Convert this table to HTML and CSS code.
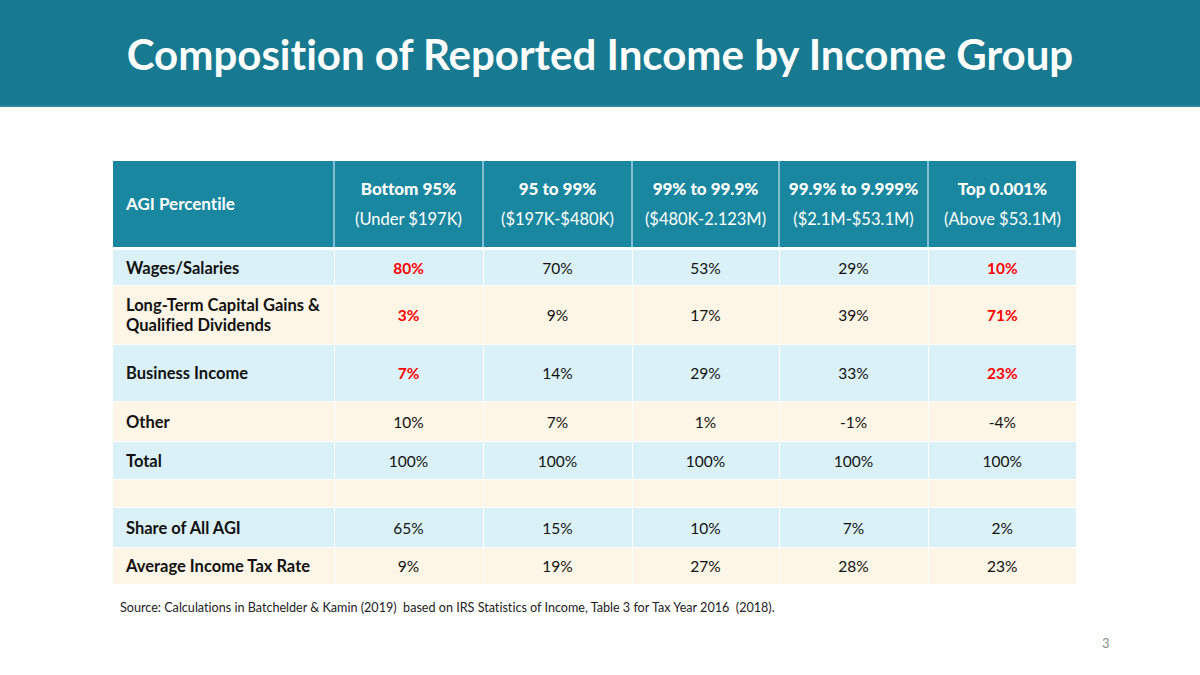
FILE: index.html
```html
<!DOCTYPE html>
<html lang="en">
<head>
    <meta charset="UTF-8">
    <meta name="viewport" content="width=device-width, initial-scale=1.0">
    <title>Composition of Reported Income by Income Group</title>
    <link rel="stylesheet" href="styles.css">
</head>
<body>
    <div class="titulo">
        <h1>Composition of Reported Income by Income Group</h1>
    </div>

    <div class="conteudo">
        <table class="tabela">
            <colgroup>
                <col class="c221">
                <col class="c149">
                <col class="c149">
                <col class="c147">
                <col class="c149">
                <col class="c148">
            </colgroup>
            <thead>
                <tr>
                    <th class="rotulo">AGI Percentile</th>
                    <th><b>Bottom 95%</b><span>(Under $197K)</span></th>
                    <th><b>95 to 99%</b><span>($197K-$480K)</span></th>
                    <th><b>99% to 99.9%</b><span>($480K-2.123M)</span></th>
                    <th><b>99.9% to 9.999%</b><span>($2.1M-$53.1M)</span></th>
                    <th><b>Top 0.001%</b><span>(Above $53.1M)</span></th>
                </tr>
            </thead>
            <tbody>
                <tr class="azul l37">
                    <td>Wages/Salaries</td>
                    <td class="red">80%</td><td>70%</td><td>53%</td><td>29%</td><td class="red">10%</td>
                </tr>
                <tr class="bege l59">
                    <td>Long-Term Capital Gains &amp;<br>Qualified Dividends</td>
                    <td class="red">3%</td><td>9%</td><td>17%</td><td>39%</td><td class="red">71%</td>
                </tr>
                <tr class="azul l57">
                    <td>Business Income</td>
                    <td class="red">7%</td><td>14%</td><td>29%</td><td>33%</td><td class="red">23%</td>
                </tr>
                <tr class="bege l40">
                    <td>Other</td>
                    <td>10%</td><td>7%</td><td>1%</td><td>-1%</td><td>-4%</td>
                </tr>
                <tr class="azul l38">
                    <td>Total</td>
                    <td>100%</td><td>100%</td><td>100%</td><td>100%</td><td>100%</td>
                </tr>
                <tr class="bege l28">
                    <td></td><td></td><td></td><td></td><td></td><td></td>
                </tr>
                <tr class="azul l40">
                    <td>Share of All AGI</td>
                    <td>65%</td><td>15%</td><td>10%</td><td>7%</td><td>2%</td>
                </tr>
                <tr class="bege l37">
                    <td>Average Income Tax Rate</td>
                    <td>9%</td><td>19%</td><td>27%</td><td>28%</td><td>23%</td>
                </tr>
            </tbody>
        </table>

        <p class="fonte">Source: Calculations in Batchelder &amp; Kamin (2019)&nbsp; based on IRS Statistics of Income, Table 3 for Tax Year 2016&nbsp; (2018).</p>
    </div>

    <div class="pagina">3</div>
</body>
</html>
```

FILE: styles.css
```css
body{
    margin: 0;
    width: 1200px;
    height: 675px;
    background-color: white;
    font-family: Lato, "Open Sans", Arial, sans-serif;
    font-variant-ligatures: none;
    overflow: hidden;
}

.titulo{
    background-color: #177a91;
    height: 105px;
    border-bottom: 2px solid #2a8ba1;
    display: flex;
    align-items: center;
    justify-content: center;
}

.titulo > h1{
    margin: 0;
    margin-top: 2px;
    color: white;
    font-size: 42px;
    font-weight: bold;
}

.conteudo{
    padding-top: 54px;
    padding-left: 113px;
}

.tabela{
    border-collapse: collapse;
    table-layout: fixed;
    width: 963px;
    font-size: 15.5px;
    color: #111;
}

.c221{ width: 221px; }
.c149{ width: 149px; }
.c147{ width: 147px; }
.c148{ width: 148px; }

.tabela th{
    background-color: #1a87a0;
    color: white;
    height: 86px;
    padding: 0;
    border-left: 2px solid #7fbfcf;
    border-bottom: 3px solid white;
    line-height: 30px;
    text-align: center;
}

.tabela th:first-child{
    border-left: none;
}

.tabela th b{
    display: block;
    font-size: 17px;
}

.tabela th span{
    display: block;
    font-weight: normal;
    font-size: 16.5px;
}

.tabela th.rotulo{
    text-align: left;
    padding-left: 13px;
    font-size: 17px;
}

.tabela td{
    padding: 0;
    border: 1px solid white;
    text-align: center;
    line-height: 20px;
}

.tabela td:first-child{
    text-align: left;
    padding-left: 13px;
    font-weight: bold;
    font-size: 16.5px;
    border-left: none;
}

.tabela td:last-child{
    border-right: none;
}

.azul{
    background-color: #dbf1f8;
}

.bege{
    background-color: #fdf5e6;
}

.red{
    color: #ff0000;
    font-weight: bold;
}

.l37{ height: 37px; }
.l59{ height: 59px; }
.l57{ height: 57px; }
.l40{ height: 40px; }
.l38{ height: 38px; }
.l28{ height: 28px; }

.fonte{
    margin: 15px 0 0 7px;
    font-size: 12.6px;
    color: #222;
}

.pagina{
    position: absolute;
    left: 1102px;
    top: 635px;
    font-size: 13px;
    color: #8c8c8c;
}
```
